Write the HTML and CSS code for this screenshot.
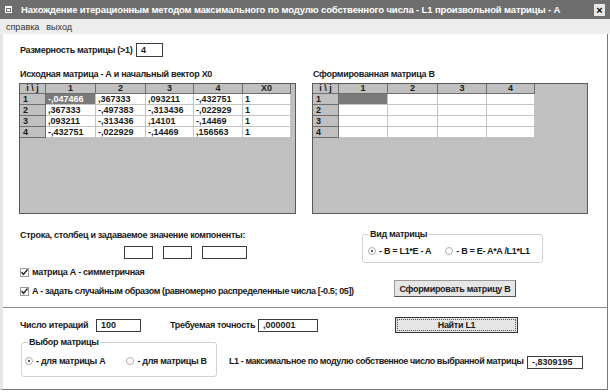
FILE: index.html
```html
<!DOCTYPE html>
<html lang="ru">
<head>
<meta charset="utf-8">
<title>L1</title>
<link rel="stylesheet" href="styles.css">
</head>
<body>
<div class="titlebar">
  <span class="ticon"><svg width="8" height="7" viewBox="0 0 8 7"><rect x="0" y="0" width="7" height="7" fill="#fff"/><rect x="1" y="2" width="5" height="4" fill="#6e6e6e"/><rect x="2" y="3" width="3" height="2" fill="#fff"/></svg></span>
  <span class="ttext">Нахождение итерационным методом максимального по модулю собственного числа - L1 произвольной матрицы - А</span>
  <span class="close">×</span>
</div>
<div class="menubar"><span class="mi">справка</span><span class="mi">выход</span></div>
<div class="client">
  <div class="dim-row">
    <span class="lbl lbl-dim">Размерность матрицы (&gt;1)</span>
    <span class="field f-dim">4</span>
  </div>

  <div class="grids">
    <div class="gridcol">
      <div class="cap">Исходная матрица - А и начальный вектор X0</div>
      <div class="gridbox gb-a">
        <div class="grid grid-a">
          <div class="hc">i \ j</div><div class="hc">1</div><div class="hc">2</div><div class="hc">3</div><div class="hc">4</div><div class="hc">X0</div>
          <div class="rh">1</div><div class="dc sel">-,047466</div><div class="dc">,367333</div><div class="dc">,093211</div><div class="dc">-,432751</div><div class="dc">1</div>
          <div class="rh">2</div><div class="dc">,367333</div><div class="dc">-,497383</div><div class="dc">-,313436</div><div class="dc">-,022929</div><div class="dc">1</div>
          <div class="rh">3</div><div class="dc">,093211</div><div class="dc">-,313436</div><div class="dc">,14101</div><div class="dc">-,14469</div><div class="dc">1</div>
          <div class="rh">4</div><div class="dc">-,432751</div><div class="dc">-,022929</div><div class="dc">-,14469</div><div class="dc">,156563</div><div class="dc">1</div>
        </div>
      </div>
    </div>
    <div class="gridcol">
      <div class="cap">Сформированная матрица В</div>
      <div class="gridbox gb-b">
        <div class="grid grid-b">
          <div class="hc">i \ j</div><div class="hc">1</div><div class="hc">2</div><div class="hc">3</div><div class="hc">4</div>
          <div class="rh">1</div><div class="dc sel"></div><div class="dc"></div><div class="dc"></div><div class="dc"></div>
          <div class="rh">2</div><div class="dc"></div><div class="dc"></div><div class="dc"></div><div class="dc"></div>
          <div class="rh">3</div><div class="dc"></div><div class="dc"></div><div class="dc"></div><div class="dc"></div>
          <div class="rh">4</div><div class="dc"></div><div class="dc"></div><div class="dc"></div><div class="dc"></div>
        </div>
      </div>
    </div>
  </div>

  <div class="mid">
    <div class="mid-left">
      <div class="lbl">Строка, столбец и задаваемое значение компоненты:</div>
      <div class="triple">
        <span class="field f-s"></span><span class="field f-s"></span><span class="field f-m"></span>
      </div>
      <div class="check c1"><span class="cb"><svg width="7" height="7" viewBox="0 0 7 7"><path d="M0.5 3 L2.5 5.5 L6.5 0.5" fill="none" stroke="#222" stroke-width="1.4"/></svg></span><span>матрица А - симметричная</span></div>
      <div class="check c2"><span class="cb"><svg width="7" height="7" viewBox="0 0 7 7"><path d="M0.5 3 L2.5 5.5 L6.5 0.5" fill="none" stroke="#222" stroke-width="1.4"/></svg></span><span>А - задать случайным образом (равномерно распределенные числа [-0.5; 05])</span></div>
    </div>
    <div class="mid-right">
      <fieldset class="group g-vid">
        <legend>Вид матрицы</legend>
        <div class="radios">
          <span class="radio on"></span><span class="rt">- B = L1*E - A</span>
          <span class="radio r2"></span><span class="rt">- B = E- A*A /L1*L1</span>
        </div>
      </fieldset>
      <button class="btn btn-form">Сформировать матрицу В</button>
    </div>
  </div>

  <div class="sep"></div>

  <div class="brow">
    <span class="lbl lbl-it">Число итераций</span>
    <span class="field f-it">100</span>
    <span class="lbl lbl-tol">Требуемая точность</span>
    <span class="field f-tol">,000001</span>
    <button class="btn btn-find"><span class="focus">Найти L1</span></button>
  </div>

  <div class="brow2">
    <fieldset class="group g-sel">
      <legend>Выбор матрицы</legend>
      <div class="radios">
        <span class="radio on"></span><span class="rt">- для матрицы А</span>
        <span class="radio r2b"></span><span class="rt">- для матрицы В</span>
      </div>
    </fieldset>
    <span class="lbl lbl-l1">L1 - максимальное по модулю собственное число выбранной матрицы</span>
    <span class="field f-out">-,8309195</span>
  </div>
</div>
</body>
</html>
```

FILE: styles.css
```css
* { box-sizing: border-box; }
body {
  margin: 0;
  width: 610px;
  height: 392px;
  overflow: hidden;
  background: #fff;
  font-family: "Liberation Sans", Arial, sans-serif;
  font-weight: bold;
  font-size: 9px;
  letter-spacing: -0.3px;
  color: #1a1a1a;
}
.titlebar {
  height: 19px;
  width: 610px;
  background: #6e6e6e;
  display: flex;
  align-items: center;
  color: #fff;
  font-size: 9.5px;
  letter-spacing: -0.15px;
}
.ticon { width: 8px; height: 7px; margin-left: 5px; margin-right: 8px; display: flex; }
.ttext { flex: 1; white-space: nowrap; overflow: hidden; }
.close {
  width: 11px; height: 12px; margin-right: 5px;
  background: #e8e8e8; color: #000;
  font-size: 11px; line-height: 12px; text-align: center; letter-spacing: 0;
}
.menubar {
  height: 15px;
  background: #ededed;
  display: flex;
  align-items: center;
  font-weight: normal;
  font-size: 9px;
  letter-spacing: 0;
  color: #333;
  padding-left: 6px;
  gap: 7px;
}
.client {
  width: 608px;
  height: 356px;
  border-left: 3px solid #e6e6e6;
  border-right: 1px solid #7a7a7a;
  border-bottom: 1px solid #7a7a7a;
  display: flex;
  flex-direction: column;
}
.lbl { white-space: nowrap; line-height: 11px; }
.field {
  display: block;
  background: #fff;
  border: 1px solid #3c3c3c;
  line-height: 11px;
  padding-left: 4px;
  white-space: nowrap;
  letter-spacing: 0;
}
.dim-row { display: flex; align-items: center; margin-top: 9px; padding-left: 17px; }
.lbl-dim { width: 116px; }
.f-dim { width: 27px; height: 14px; padding-top: 1px; }

.grids { display: flex; gap: 16px; margin-top: 12px; padding-left: 16px; }
.cap { line-height: 11px; margin-bottom: 3px; padding-left: 1px; }
.gridbox {
  height: 131px;
  background: #c0c0c0;
  border: 1px solid #5a5a5a;
}
.gb-a { width: 277px; }
.gb-b { width: 276px; }
.grid { display: grid; grid-template-rows: 10px; grid-auto-rows: 11px; letter-spacing: 0; }
.grid-a { grid-template-columns: 26px 50px 50px 48px 49px 48px; }
.grid-b { grid-template-columns: 26px 49px 50px 49px 48px; }
.hc, .rh, .dc { line-height: 10px; white-space: nowrap; overflow: hidden; }
.hc {
  background: #c0c0c0;
  border-right: 1px solid #6e6e6e;
  border-bottom: 1px solid #6e6e6e;
  text-align: center;
  line-height: 9px;
}
.rh {
  background: #c0c0c0;
  border-right: 1px solid #6e6e6e;
  border-bottom: 1px solid #6e6e6e;
  padding-left: 3px;
}
.dc {
  background: #fff;
  border-right: 1px solid #c4c4c4;
  border-bottom: 1px solid #c4c4c4;
  padding-left: 2px;
}
.dc.sel { background: #7a7a7a; color: #fff; }

.mid { display: flex; margin-top: 16px; padding-left: 16px; }
.mid-left { width: 343px; padding-left: 1px; }
.triple { display: flex; margin-top: 5px; margin-left: 104px; gap: 10px; }
.f-s { width: 29px; height: 13px; }
.f-m { width: 45px; height: 13px; }
.check { display: flex; align-items: center; line-height: 10px; white-space: nowrap; }
.c1 { margin-top: 8px; }
.c2 { margin-top: 9px; letter-spacing: -0.38px; }
.cb {
  width: 9px; height: 9px; border: 1px solid #9a9a9a; background: #fff;
  margin-right: 3px; display: flex; align-items: center; justify-content: center;
  flex: none;
}
.mid-right { display: flex; flex-direction: column; }
.group {
  margin: 0;
  border: 1px solid #d2d2d2;
  border-radius: 3px;
  padding: 0;
}
.group legend { padding: 0 1px; margin-left: 6px; line-height: 11px; }
.g-vid { width: 181px; height: 34px; margin-top: -1px; }
.radios { display: flex; align-items: center; line-height: 10px; white-space: nowrap; }
.g-vid .radios { margin-top: 6px; padding-left: 5px; }
.radio {
  width: 8px; height: 8px; border-radius: 50%;
  border: 1px solid #b0b0b0; background: #fff;
  margin-right: 3px; display: flex; align-items: center; justify-content: center;
  flex: none;
}
.radio.on::after { content: ""; width: 2px; height: 2px; border-radius: 50%; background: #222; }
.r2 { margin-left: 14px; }
.r2b { margin-left: 21px; }
.btn {
  font-family: inherit; font-weight: bold; font-size: 9px; color: #1a1a1a;
  letter-spacing: -0.3px;
  background: #e6e6e6;
  border: 1px solid #9a9a9a;
  border-right-color: #555;
  border-bottom-color: #555;
  padding: 0;
}
.btn-form { width: 122px; height: 17px; margin-top: 17px; margin-left: 32px; }

.sep { height: 1px; background: #8a8a8a; margin-top: 10px; }

.brow { display: flex; align-items: center; margin-top: 9px; padding-left: 17px; height: 16px; }
.lbl-it { width: 76px; }
.f-it { width: 45px; height: 13px; }
.lbl-tol { width: 88px; margin-left: 29px; }
.f-tol { width: 60px; height: 13px; }
.btn-find { width: 123px; height: 16px; margin-left: 77px; border: 1px solid #333; padding: 1px; }
.focus { display: block; height: 12px; line-height: 11px; border: 1px dotted #555; }

.brow2 { display: flex; align-items: flex-start; margin-top: 4px; padding-left: 18px; }
.g-sel { width: 196px; height: 40px; }
.g-sel .radios { margin-top: 8px; padding-left: 3px; }
.lbl-l1 { margin-left: 12px; width: 298px; margin-top: 19px; letter-spacing: -0.42px; }
.f-out { width: 56px; height: 13px; margin-top: 19px; }
```
